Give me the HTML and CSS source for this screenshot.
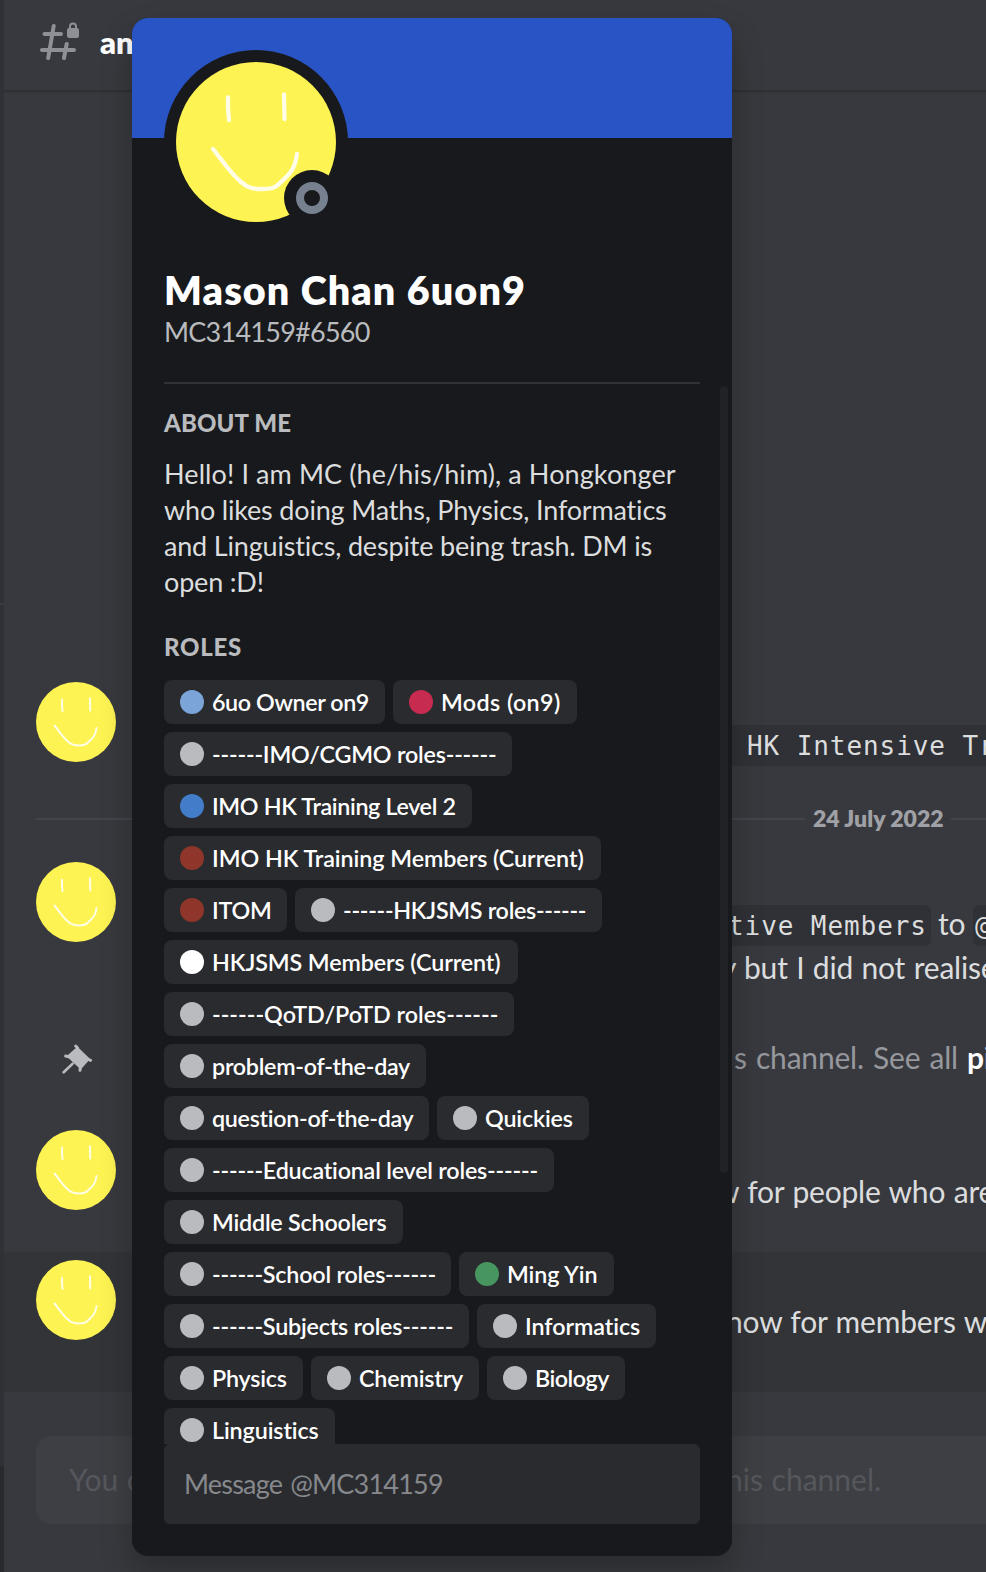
FILE: index.html
```
<!DOCTYPE html>
<html lang="en">
<head>
<meta charset="utf-8">
<title>Mason Chan 6uon9</title>
<link rel="stylesheet" href="styles.css">
</head>
<body>
<svg class="defs" aria-hidden="true">
  <symbol id="face" viewBox="0 0 160 160">
    <circle cx="80" cy="80" r="80" fill="#fdf352"/>
    <g fill="none" stroke="#fffde6" stroke-linecap="round" stroke-linejoin="round">
      <path d="M52 35.500Q51.500 46 53 58"/>
      <path d="M108 32.500L108.500 57"/>
      <path d="M37 87C46 98 54 111 65 120C72 126 77 127 86 127C95 127 99 126.500 104 121C110 115 115 112 118 104C120 99 120.500 96 121 92"/>
    </g>
  </symbol>
</svg>
<div class="app">
  <aside class="sidebar"><div class="side-top"></div><div class="side-mid"></div><div class="side-user"></div></aside>
  <main class="chat">
    <header class="header">
      <svg class="hash" viewBox="0 0 42 40" fill="none" stroke="#8e9096" stroke-width="4" stroke-linecap="round">
        <path d="M5.500 14H22M3 30H35M14.700 6L9.200 38M27.700 24L25 38"/>
        <rect x="28" y="8" width="12" height="10" rx="2.200" fill="#8e9096" stroke="none"/>
        <path d="M31 9V6.500a3 3 0 0 1 6 0V9" stroke-width="2"/>
      </svg>
      <h1 class="channel">an</h1>
    </header>

    <section class="message first">
      <svg class="avatar"><use href="#face"/></svg>
      <div class="body"><p class="line l-hk"><code class="c-hk">HK Intensive Tr</code></p></div>
    </section>

    <div class="divider"><span class="rule"></span><span class="date">24 July 2022</span><span class="rule end"></span></div>

    <section class="message second">
      <svg class="avatar"><use href="#face"/></svg>
      <div class="body">
        <p class="line l-tive"><code class="c-tive">tive Members</code><span class="to">to</span><code class="c-at">@</code></p>
        <p class="line l-but">y but I did not realise</p>
      </div>
    </section>

    <section class="system">
      <svg class="pin" viewBox="0 0 60 60">
        <g transform="scale(.3333)" fill="#b9bbbe" stroke="#b9bbbe" stroke-linecap="round" stroke-linejoin="round">
          <path d="M82 54L116 87L92 114L54 79Z" stroke-width="6"/>
          <path d="M77 48L83 54M122 91L114 88M47 78L56 80M90 121L91 112" stroke-width="9"/>
          <path d="M68 101L41 127" stroke-width="8"/>
        </g>
      </svg>
      <p class="line muted">s channel. See all <b>pi</b></p>
    </section>

    <section class="message third">
      <svg class="avatar"><use href="#face"/></svg>
      <div class="body"><p class="line l-for">w for people who are</p></div>
    </section>

    <section class="message hovered">
      <svg class="avatar"><use href="#face"/></svg>
      <div class="body"><p class="line l-now">now for members w</p></div>
    </section>

    <div class="composer"><span class="ph-start">You c</span><span class="ph-end">his channel.</span></div>
  </main>
</div>

<div class="popout">
  <div class="banner"></div>
  <div class="portrait">
    <svg class="big-avatar" viewBox="0 0 184 184">
      <circle cx="92" cy="92" r="92" fill="#18191c"/>
      <svg x="12" y="12" width="160" height="160"><use href="#face"/></svg>
      <circle cx="148" cy="148" r="28" fill="#18191c"/>
      <circle cx="148" cy="148" r="12" fill="none" stroke="#77808e" stroke-width="8"/>
    </svg>
  </div>
  <div class="identity">
    <h2 class="name">Mason Chan 6uon9</h2>
    <p class="tag">MC314159#6560</p>
  </div>
  <div class="scroller">
    <h3 class="label">ABOUT ME</h3>
    <p class="about"><span>Hello! I am MC (he/his/him), a Hongkonger</span><br><span class="tight">who likes doing Maths, Physics, Informatics</span><br><span class="tight">and Linguistics, despite being trash. DM is</span><br><span class="tight">open :D!</span></p>
    <h3 class="label roles-label">ROLES</h3>
    <ul class="roles">
      <li class="role sky" style="--w:221px;--t:-.4px">6uo Owner on9</li>
      <li class="role crimson" style="--w:184px;--t:.4px">Mods (on9)</li>
      <li class="role" style="--w:348px;--t:-.2px">------IMO/CGMO roles------</li>
      <li class="role blue" style="--w:308px;--t:-.35px">IMO HK Training Level 2</li>
      <li class="role brick" style="--w:437px;--t:-.05px">IMO HK Training Members (Current)</li>
      <li class="role brick" style="--w:123px;--t:-.25px">ITOM</li>
      <li class="role" style="--w:307px;--t:-.3px">------HKJSMS roles------</li>
      <li class="role white" style="--w:354px;--t:-.1px">HKJSMS Members (Current)</li>
      <li class="role" style="--w:350px;--t:0px">------QoTD/PoTD roles------</li>
      <li class="role" style="--w:262px;--t:-.27px">problem-of-the-day</li>
      <li class="role" style="--w:265px;--t:-.3px">question-of-the-day</li>
      <li class="role" style="--w:152px;--t:-.15px">Quickies</li>
      <li class="role" style="--w:390px;--t:-.2px">------Educational level roles------</li>
      <li class="role" style="--w:239px;--t:-.2px">Middle Schoolers</li>
      <li class="role" style="--w:287px;--t:-.2px">------School roles------</li>
      <li class="role green" style="--w:155px;--t:-.1px">Ming Yin</li>
      <li class="role" style="--w:305px;--t:-.2px">------Subjects roles------</li>
      <li class="role" style="--w:179px;--t:-.05px">Informatics</li>
      <li class="role" style="--w:139px;--t:-.2px">Physics</li>
      <li class="role" style="--w:168px;--t:-.15px">Chemistry</li>
      <li class="role" style="--w:138px;--t:-.5px">Biology</li>
      <li class="role" style="--w:171px;--t:-.1px">Linguistics</li>
    </ul>
  </div>
  <div class="dm">Message @MC314159</div>
  <div class="scrollbar"></div>
</div>
</body>
</html>
```
FILE: styles.css
```
* { box-sizing: border-box; }
body { margin: 0; background: #38393e; color: #dcddde; font-family: Lato, "Liberation Sans", sans-serif; overflow: hidden; }
h1, h2, h3, p, ul { margin: 0; padding: 0; font-weight: 400; }
.defs { position: absolute; width: 0; height: 0; }

.app { display: flex; width: 986px; height: 1572px; overflow: hidden; }
.sidebar { width: 4px; display: flex; flex-direction: column; flex: none; background: #303136; }
.side-top { height: 603px; }
.side-mid { height: 863px; border-top: 2px solid #3a3b41; }
.side-user { flex: 1; background: #292a2e; }
.chat { width: 982px; display: flex; flex-direction: column; overflow: hidden; }

.header { height: 92px; flex: none; display: flex; border-bottom: 2px solid #2f3034; box-shadow: 0 1px 1px #34353a; padding: 20px 0 0 35px; }
.hash { width: 42px; height: 40px; flex: none; }
.channel { margin-left: 19px; font-size: 31px; line-height: 44px; font-weight: 800; color: #fff; }

.message { display: flex; flex: none; height: 83px; padding-left: 32px; }
.first { margin-top: 590px; }
.avatar { width: 80px; height: 80px; flex: none; stroke-width: 4px; }
.body { padding-top: 39px; }
.line { font-size: 30px; line-height: 44px; height: 44px; white-space: nowrap; display: flex; letter-spacing: -.2px; word-spacing: 1px; }
code { font-family: "DejaVu Sans Mono", monospace; font-size: 26px; letter-spacing: .92px; word-spacing: 0; line-height: 43px; height: 41px; margin-top: 4px; background: #303136; }
.c-hk { margin-left: 580px; padding-left: 51px; width: 300px; }
.c-tive { margin-left: 580px; padding-left: 32px; width: 235px; border-radius: 6px; }
.to { margin-left: 7px; width: 35px; }
.c-at { padding-left: 2px; width: 60px; border-radius: 6px; }
.l-but { padding-left: 605px; }
.l-for { padding-left: 600px; }
.l-now { padding-left: 610px; }

.divider { display: flex; align-items: center; flex: none; height: 24px; margin: 42px 0 31px 32px; }
.rule { width: 769px; flex: none; height: 2px; background: #43454b; }
.date { width: 146px; flex: none; padding-left: 8px; font-size: 23px; line-height: 22px; height: 24px; font-weight: 800; color: #a0a1a6; white-space: nowrap; }
.end { width: 40px; }

.second { height: 127px; }
.system { display: flex; flex: none; height: 44px; margin: 46px 0 51px; padding-left: 46px; }
.pin { width: 60px; height: 60px; flex: none; margin-top: -5px; }
.muted { margin-left: 624px; display: block; color: #96989d; letter-spacing: -.2px; word-spacing: 1.700px; }
.muted b { color: #fff; }
.hovered { margin-top: 39px; padding-top: 8px; height: 140px; background: #333438; }

.composer { flex: none; height: 88px; margin: 44px 0 0 32px; border-radius: 16px 0 0 16px; background: #3e3f44; color: #55575c; display: flex; padding-left: 33px; font-size: 30px; line-height: 86px; white-space: nowrap; word-spacing: 1px; }
.ph-start { width: 657px; }

.popout { position: absolute; left: 132px; top: 18px; width: 600px; height: 1538px; border-radius: 16px; background: #18191c; overflow: hidden; box-shadow: 0 16px 32px rgba(0, 0, 0, .24); display: flex; flex-direction: column; }
.banner { height: 120px; flex: none; background: #2854c5; }
.portrait { height: 112px; flex: none; margin-left: 32px; }
.big-avatar { display: block; width: 184px; height: 184px; margin-top: -88px; stroke-width: 4.300px; }
.identity { flex: none; height: 118px; margin: 16px 32px 0; border-bottom: 2px solid #303237; white-space: nowrap; }
.name { font-size: 39.500px; line-height: 47px; font-weight: 800; color: #fff; letter-spacing: 1.100px; }
.tag { font-size: 27px; line-height: 38px; color: #b9bbbe; letter-spacing: -.75px; }
.scroller { flex: none; height: 1060px; overflow: hidden; padding: 28px 0 0 32px; }
.label { font-size: 24px; line-height: 22px; height: 24px; font-weight: 900; color: #b9bbbe; letter-spacing: .1px; }
.about { margin-top: 20px; font-size: 27px; line-height: 36px; height: 144px; white-space: nowrap; letter-spacing: .1px; }
.tight { letter-spacing: -.18px; }
.roles-label { margin-top: 36px; letter-spacing: .7px; }
.roles { list-style: none; margin-top: 20px; width: 520px; display: flex; flex-wrap: wrap; gap: 8px; }
.role { width: var(--w); height: 44px; display: flex; align-items: center; gap: 8px; padding-left: 16px; border-radius: 8px; background: #2a2b2f; color: #fff; font-size: 23.300px; line-height: 42px; font-weight: 600; white-space: nowrap; letter-spacing: var(--t); }
.role::before { content: ""; width: 24px; height: 24px; flex: none; border-radius: 50%; background: #b9bbbe; }
.sky::before { background: #7ba5d9; }
.crimson::before { background: #c72b50; }
.blue::before { background: #437dc9; }
.brick::before { background: #8f352a; }
.white::before { background: #fff; }
.green::before { background: #479660; }
.dm { flex: none; width: 536px; height: 80px; margin-left: 32px; padding-left: 20px; border-radius: 6px; background: #2a2b2f; color: #86888c; font-size: 27px; line-height: 80px; letter-spacing: -.8px; word-spacing: 2px; }
.scrollbar { position: absolute; right: 4px; top: 368px; width: 8px; height: 787px; border-radius: 4px; background: #202225; }
```
